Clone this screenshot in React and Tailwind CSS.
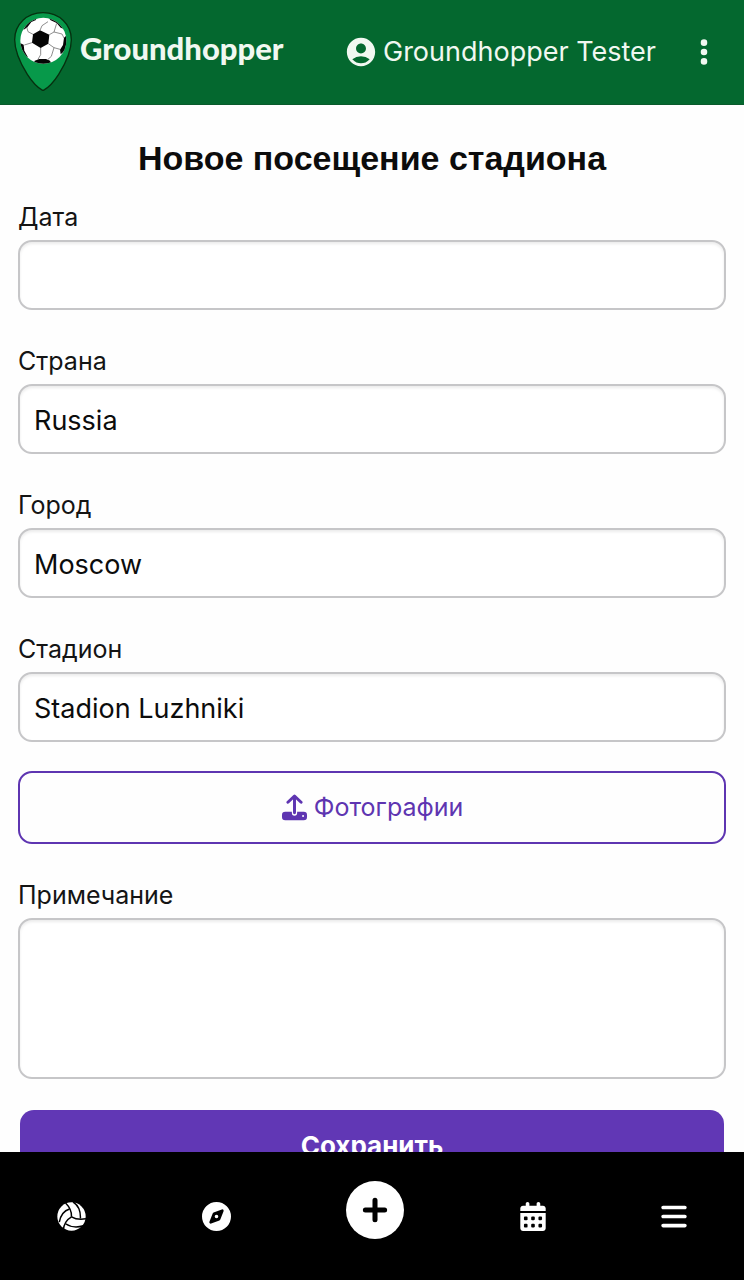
import {
  FaBars,
  FaCalendarDays,
  FaCompass,
  FaEllipsisVertical,
  FaPlus,
} from "react-icons/fa6";
import { MdAccountCircle } from "react-icons/md";

const FIELDS = [
  { id: "date",    label: "Дата",    value: "" },
  { id: "country", label: "Страна",  value: "Russia" },
  { id: "city",    label: "Город",   value: "Moscow" },
  { id: "stadium", label: "Стадион", value: "Stadion Luzhniki" },
];

const CONTROL =
  "block w-full rounded-[14px] border-2 border-[#c6c6c8] bg-white px-[14px] text-[27px] text-[#0c0c0c] shadow-[inset_0_2px_3px_rgba(0,0,0,0.08)] outline-none";

const LABEL = "mb-[6px] block text-[25px] leading-[34px] text-[#141414]";

// Map pin with a football in its head
function PinLogo() {
  return (
    <svg viewBox="42 35 174 237" className="h-[79px] w-[58px]" aria-hidden="true">
      <defs>
        <clipPath id="ball">
          <circle cx="130" cy="121" r="69" />
        </clipPath>
      </defs>
      <path
        d="M129 37C80 37 44 73 44 118c0 34 18 72 38 104 14 22 29 39 47 49 18-10 33-27 47-49 20-32 38-70 38-104 0-45-36-81-85-81z"
        fill="#07994a"
        stroke="#06300f"
        strokeWidth="4"
      />
      <circle cx="130" cy="121" r="69" fill="#fff" />
      <g clipPath="url(#ball)">
        <g fill="#050505">
          <path d="M120 90l28 13-3 27-23 13-26-16 3-25z" />
          <path d="M76 76l14-16 20-10-2 9-14 6-12 16-12 8z" />
          <path d="M142 48l10 12 18 8 12 14 10 4 6-10-26-28z" />
          <path d="M206 100l-14 12-3 22-9 14 2 14 24-20z" />
          <path d="M56 126l15 7 2 18 10 18-6 12-24-28z" />
          <path d="M104 181l14-5h20l12 5 6 14h-56z" />
        </g>
        <g fill="none" stroke="#555" strokeWidth="2">
          <path d="M120 90l6-14 18-12" />
          <path d="M148 103l14-8 8-26M162 95l24 6 6 12" />
          <path d="M145 130l17 12 18 5M162 142l-8 26-10 9" />
          <path d="M122 143v20l-8 14M73 134l23-7" />
          <path d="M99 102L84 94l-4-14" />
        </g>
      </g>
    </svg>
  );
}

function UploadIcon() {
  return (
    <svg viewBox="60 98 80 82" className="size-[27px]" fill="none" aria-hidden="true">
      <rect x="62" y="152" width="76" height="26" rx="10" fill="#5e35b1" />
      <path d="M100 140v16" stroke="#fff" strokeWidth="16" strokeLinecap="round" />
      <path
        d="M100 106v49M80 123l20-19 20 19"
        stroke="#5e35b1"
        strokeWidth="9"
        strokeLinecap="round"
        strokeLinejoin="round"
      />
      <circle cx="126" cy="165" r="3" fill="#fff" />
    </svg>
  );
}

function VolleyballIcon() {
  return (
    <svg viewBox="52 67 88 88" className="size-[29px]" fill="none" aria-hidden="true">
      <circle cx="96" cy="111" r="43" fill="currentColor" />
      <g stroke="#000" strokeWidth="4.5">
        <path d="M96 112C97 97 91 83 78 70" />
        <path d="M96 112c13 8 28 9 44 6" />
        <path d="M96 112c-14 8-23 22-25 40" />
        <path d="M101 67c16 10 23 27 22 50" />
        <path d="M90 88c-17 5-27 18-31 40" />
        <path d="M78 133c15 10 34 12 54 6" />
      </g>
    </svg>
  );
}

function Header() {
  return (
    <header className="flex h-[105px] shrink-0 items-start border-b border-[#0a5a2c] bg-[#04682f] pr-[32px] pl-[14px] text-[#f1f8f1]">
      <a href="#home" className="mt-3 flex items-center gap-2">
        <PinLogo />
        <span className="pb-2 font-[Lato] text-[31px] leading-[36px] font-black">
          Groundhopper
        </span>
      </a>
      <div className="mt-[34px] ml-auto flex items-center gap-10">
        <a href="#profile" className="flex items-center gap-[5px] text-[27px] leading-[36px]">
          <MdAccountCircle className="size-[34px]" />
          Groundhopper Tester
        </a>
        <button type="button" aria-label="Menu">
          <FaEllipsisVertical className="h-[30px] w-4" />
        </button>
      </div>
    </header>
  );
}

function VisitForm() {
  return (
    <form className="px-[18px] pt-[29px]" onSubmit={(e) => e.preventDefault()}>
      <h1 className="mb-[18px] text-center font-['Liberation_Sans'] text-[34px] leading-[48px] font-bold text-[#0c0c0c]">
        Новое посещение стадиона
      </h1>

      <div className="space-y-[34px]">
        {FIELDS.map((field) => (
          <div key={field.id}>
            <label htmlFor={field.id} className={LABEL}>
              {field.label}
            </label>
            <input
              id={field.id}
              type="text"
              defaultValue={field.value}
              className={`${CONTROL} h-[70px] pt-[2px]`}
            />
          </div>
        ))}
      </div>

      <button
        type="button"
        className="mt-[29px] mb-[34px] flex h-[73px] w-full items-center justify-center gap-[6px] rounded-[14px] border-2 border-[#5e35b1] text-[25px] text-[#5e35b1]"
      >
        <UploadIcon />
        Фотографии
      </button>

      <label htmlFor="note" className={LABEL}>
        Примечание
      </label>
      <textarea id="note" className={`${CONTROL} h-[161px] resize-none py-3`} />

      <div className="px-[2px] pt-[31px] pb-8">
        <button
          type="submit"
          className="h-[70px] w-full rounded-[14px] bg-[#6137b5] text-[26px] font-bold text-white"
        >
          Сохранить
        </button>
      </div>
    </form>
  );
}

function BottomNav() {
  return (
    <nav className="flex h-32 shrink-0 items-start justify-between bg-black px-[57px] pt-[29px] text-white">
      <a href="#matches" aria-label="Matches" className="mt-[21px]">
        <VolleyballIcon />
      </a>
      <a href="#explore" aria-label="Explore" className="mt-[21px]">
        <FaCompass className="size-[29px]" />
      </a>
      <button
        type="button"
        aria-label="Add visit"
        className="flex size-[58px] items-center justify-center rounded-full bg-white text-black"
      >
        <FaPlus className="size-[28px]" strokeWidth={28} stroke="currentColor" />
      </button>
      <a href="#calendar" aria-label="Calendar" className="mt-[21px]">
        <FaCalendarDays className="h-[29px] w-[26px]" />
      </a>
      <button type="button" aria-label="More" className="mt-[21px]">
        <FaBars className="h-[29px] w-[26px]" />
      </button>
    </nav>
  );
}

export default function App() {
  return (
    <div className="flex h-screen flex-col bg-[#fefefe] font-[Inter,sans-serif]">
      <Header />
      <main className="min-h-0 flex-1 overflow-y-auto [scrollbar-width:none]">
        <VisitForm />
      </main>
      <BottomNav />
    </div>
  );
}
